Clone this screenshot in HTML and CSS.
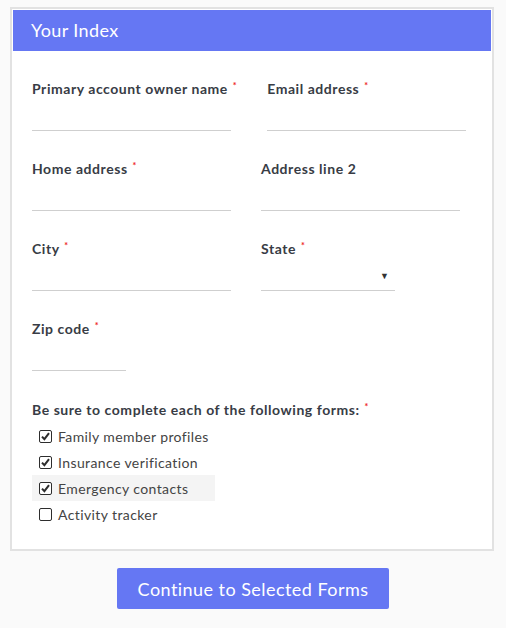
FILE: index.html
```html
<!DOCTYPE html>
<html>
<head>
<meta charset="utf-8">
<link rel="stylesheet" href="styles.css">
</head>
<body>
<div class="card">
  <div class="card-header">Your Index</div>
  <div class="card-body">
    <div class="row">
      <div class="field">
        <label class="label">Primary account owner name <span class="req">*</span></label>
        <div class="input w199"></div>
      </div>
      <div class="field">
        <label class="label">Email address <span class="req">*</span></label>
        <div class="input w199"></div>
      </div>
    </div>
    <div class="row">
      <div class="field">
        <label class="label">Home address <span class="req">*</span></label>
        <div class="input w199"></div>
      </div>
      <div class="field">
        <label class="label">Address line 2</label>
        <div class="input w199"></div>
      </div>
    </div>
    <div class="row">
      <div class="field">
        <label class="label">City <span class="req">*</span></label>
        <div class="input w199"></div>
      </div>
      <div class="field">
        <label class="label">State <span class="req">*</span></label>
        <div class="input select w134"><span class="arrow">&#9660;</span></div>
      </div>
    </div>
    <div class="row">
      <div class="field">
        <label class="label">Zip code <span class="req">*</span></label>
        <div class="input w94"></div>
      </div>
    </div>
    <div class="group">
      <div class="label">Be sure to complete each of the following forms: <span class="req">*</span></div>
      <div class="checks">
        <label class="check"><span class="box"><svg width="11" height="11" viewBox="0 0 11 11"><path d="M2 5.6 L4.4 8.2 L9 2.2" fill="none" stroke="#2d2d2d" stroke-width="2"/></svg></span>Family member profiles</label>
        <label class="check"><span class="box"><svg width="11" height="11" viewBox="0 0 11 11"><path d="M2 5.6 L4.4 8.2 L9 2.2" fill="none" stroke="#2d2d2d" stroke-width="2"/></svg></span>Insurance verification</label>
        <label class="check hover"><span class="box"><svg width="11" height="11" viewBox="0 0 11 11"><path d="M2 5.6 L4.4 8.2 L9 2.2" fill="none" stroke="#2d2d2d" stroke-width="2"/></svg></span>Emergency contacts</label>
        <label class="check"><span class="box"></span>Activity tracker</label>
      </div>
    </div>
  </div>
</div>
<div class="actions">
  <button class="btn">Continue to Selected Forms</button>
</div>
</body>
</html>
```
FILE: styles.css
```css
html, body {
  margin: 0;
  padding: 0;
  background: #fafafa;
}
body {
  padding: 7px 12px 0 10px;
  font-family: "Lato", "Open Sans", sans-serif;
  color: #383c45;
}
.card {
  background: #fff;
  border: 2px solid #e2e2e2;
  padding: 1px;
}
.card-header {
  background: #6577f3;
  color: #fff;
  height: 41px;
  line-height: 41px;
  padding-left: 18px;
  font-size: 18px;
  font-weight: 400;
  letter-spacing: 0.4px;
}
.card-body {
  padding: 28px 19px 21px 19px;
}
.row {
  display: flex;
  gap: 30px;
  margin-bottom: 28px;
}
.field {
  display: flex;
  flex-direction: column;
}
.label {
  display: block;
  font-size: 14px;
  font-weight: 700;
  line-height: 20px;
  letter-spacing: 0.55px;
  white-space: nowrap;
}
.req {
  color: #ee1c1c;
  font-size: 9px;
  position: relative;
  top: -5px;
  line-height: 0;
  margin-left: 1px;
}
.input {
  height: 31px;
  border-bottom: 1px solid #cfcfcf;
  position: relative;
}
.w199 { width: 199px; }
.w134 { width: 134px; }
.w94 { width: 94px; }
.arrow {
  position: absolute;
  right: 6px;
  top: 11px;
  font-size: 9px;
  color: #333;
}
.group {
  margin-top: 29px;
}
.checks {
  display: inline-flex;
  flex-direction: column;
  margin-top: 3px;
}
.check {
  display: flex;
  align-items: center;
  height: 26px;
  padding: 0 6px 0 7px;
  font-size: 14px;
  font-weight: 400;
  letter-spacing: 0.4px;
  color: #444;
}
.check.hover {
  background: #f4f4f4;
}
.box {
  width: 11px;
  height: 11px;
  border: 1px solid #2d2d2d;
  border-radius: 2px;
  margin-right: 6px;
  display: flex;
  align-items: center;
  justify-content: center;
  background: #fff;
}
.actions {
  display: flex;
  justify-content: center;
  padding-top: 17px;
  padding-left: 2px;
}
.btn {
  background: #6577f3;
  color: #fff;
  border: none;
  border-radius: 2px;
  height: 41px;
  width: 272px;
  font-family: "Lato", "Open Sans", sans-serif;
  font-size: 18px;
  font-weight: 400;
  letter-spacing: 0.45px;
  padding: 0;
}
```
